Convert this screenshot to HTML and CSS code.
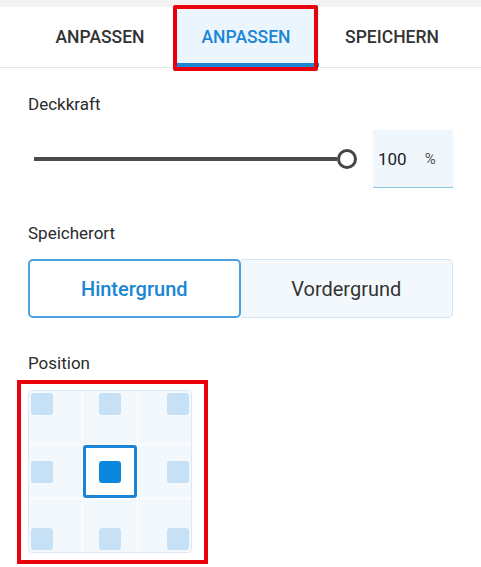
FILE: index.html
```html
<!DOCTYPE html>
<html lang="de">
<head>
  <meta charset="UTF-8">
  <meta name="viewport" content="width=device-width, initial-scale=1.0">
  <title>Wasserzeichen anpassen</title>
  <link rel="stylesheet" href="styles.css">
</head>
<body>
  <div class="topband"></div>

  <nav class="tabs">
    <div class="tab">ANPASSEN</div>
    <div class="tab active">ANPASSEN</div>
    <div class="tab">SPEICHERN</div>
  </nav>

  <main class="panel">
    <section class="field first">
      <div class="label">Deckkraft</div>
      <div class="slider-row">
        <div class="slider" role="slider" aria-valuenow="100">
          <div class="track"></div>
          <div class="thumb"></div>
        </div>
        <div class="value">
          <span class="num">100</span>
          <span class="unit">%</span>
        </div>
      </div>
    </section>

    <section class="field">
      <div class="label">Speicherort</div>
      <div class="segmented">
        <button type="button" class="seg selected">Hintergrund</button>
        <button type="button" class="seg">Vordergrund</button>
      </div>
    </section>

    <section class="field">
      <div class="label tight">Position</div>
      <div class="highlight">
        <div class="pos-grid">
          <div class="cell x-start y-start"><span class="mark"></span></div>
          <div class="cell x-center y-start"><span class="mark"></span></div>
          <div class="cell x-end y-start"><span class="mark"></span></div>
          <div class="cell x-start y-center"><span class="mark"></span></div>
          <div class="cell x-center y-center selected"><span class="mark"></span></div>
          <div class="cell x-end y-center"><span class="mark"></span></div>
          <div class="cell x-start y-end"><span class="mark"></span></div>
          <div class="cell x-center y-end"><span class="mark"></span></div>
          <div class="cell x-end y-end"><span class="mark"></span></div>
        </div>
      </div>
    </section>
  </main>
</body>
</html>
```

FILE: styles.css
```css
body {
  margin: 0;
  background: #fff;
  font-family: Roboto, "Noto Sans", sans-serif;
  color: #333;
}
.topband {
  height: 7px;
  background: #f2f2f2;
}
.tabs {
  display: flex;
  height: 60px;
  padding-left: 27px;
  border-bottom: 1px solid #e6e6e6;
}
.tab {
  width: 146px;
  display: flex;
  align-items: center;
  justify-content: center;
  font-size: 17.5px;
  font-weight: 500;
  color: #333;
}
.tab.active {
  position: relative;
  background: #eaf5fd;
  color: #1a86d4;
  box-shadow: inset 0 -4px 0 #1a86d4;
}
.tab.active::after {
  content: "";
  position: absolute;
  top: -2px;
  left: 0;
  right: 1px;
  bottom: -4px;
  border: 4px solid #e8000b;
  border-radius: 2px;
}
.panel {
  padding: 0 28px;
}
.field {
  margin-top: 35px;
}
.field.first {
  margin-top: 26px;
}
.label {
  font-size: 17px;
  line-height: 20px;
  color: #2b2b2b;
  margin-bottom: 16px;
}
.label.tight {
  margin-bottom: 7px;
}
.slider-row {
  display: flex;
  align-items: center;
  gap: 16px;
}
.slider {
  flex: 1;
  display: flex;
  align-items: center;
  padding-left: 6px;
}
.track {
  flex: 1;
  height: 4px;
  background: #4a4a4a;
}
.thumb {
  width: 14px;
  height: 14px;
  border: 3px solid #444;
  border-radius: 50%;
  background: #fff;
}
.value {
  width: 80px;
  height: 58px;
  box-sizing: border-box;
  padding-left: 5px;
  display: flex;
  align-items: center;
  gap: 18px;
  background: #eff7fd;
  border-bottom: 1px solid #8cc4e6;
}
.num {
  font-size: 17px;
  color: #222;
}
.unit {
  font-size: 15px;
  color: #555;
}
.segmented {
  display: grid;
  grid-template-columns: 1fr 1fr;
  height: 59px;
}
.seg {
  font-family: inherit;
  font-size: 20px;
  color: #333;
  background: #f3f8fc;
  border: 1px solid #d3e6f4;
  border-left: none;
  border-radius: 0 5px 5px 0;
  cursor: pointer;
}
.seg.selected {
  background: #fff;
  color: #1a86d4;
  font-weight: 500;
  border: 2px solid #4ba0de;
  border-radius: 5px;
}
.highlight {
  width: fit-content;
  margin-left: -11px;
  padding: 6px 12px 7px 7px;
  border: 4px solid #e8000b;
}
.pos-grid {
  display: grid;
  grid-template-columns: repeat(3, 1fr);
  grid-template-rows: repeat(3, 1fr);
  gap: 1px;
  width: 164px;
  height: 163px;
  box-sizing: border-box;
  background: #fff;
  border: 1px solid #dce9f4;
  border-radius: 4px;
  overflow: hidden;
}
.cell {
  display: flex;
  padding: 2px;
  background: #f3f8fd;
}
.x-start { justify-content: flex-start; }
.x-center { justify-content: center; }
.x-end { justify-content: flex-end; }
.y-start { align-items: flex-start; }
.y-center { align-items: center; }
.y-end { align-items: flex-end; }
.mark {
  width: 22px;
  height: 22px;
  border-radius: 3px;
  background: #c6e1f5;
}
.cell.selected {
  background: #fff;
  border: 3px solid #1a85d6;
  border-radius: 3px;
}
.cell.selected .mark {
  background: #0a88e0;
}
```
